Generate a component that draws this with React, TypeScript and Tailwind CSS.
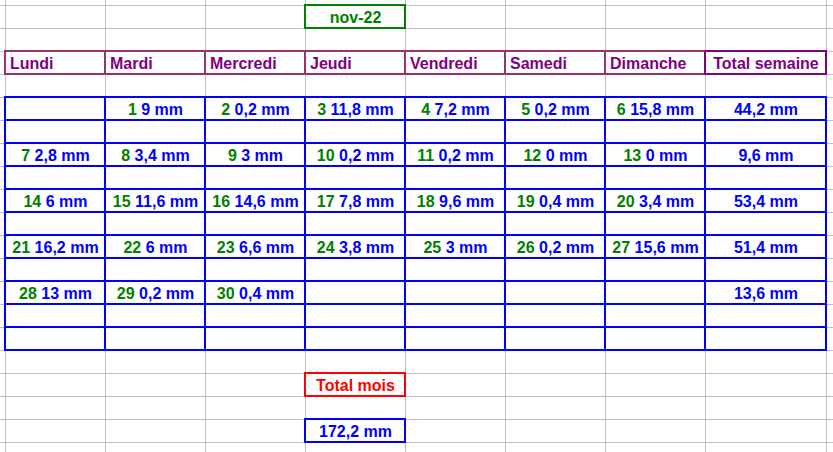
import clsx from "clsx"
import type { ReactNode } from "react"

const days = ["Lundi", "Mardi", "Mercredi", "Jeudi", "Vendredi", "Samedi", "Dimanche"]

type Day = [number, string] | null

// rows of the sheet that hold a week, with its daily values and total
const weeks: { row: number; days: Day[]; total: string }[] = [
  { row: 5, days: [null, [1, "9"], [2, "0,2"], [3, "11,8"], [4, "7,2"], [5, "0,2"], [6, "15,8"]], total: "44,2" },
  { row: 7, days: [[7, "2,8"], [8, "3,4"], [9, "3"], [10, "0,2"], [11, "0,2"], [12, "0"], [13, "0"]], total: "9,6" },
  { row: 9, days: [[14, "6"], [15, "11,6"], [16, "14,6"], [17, "7,8"], [18, "9,6"], [19, "0,4"], [20, "3,4"]], total: "53,4" },
  { row: 11, days: [[21, "16,2"], [22, "6"], [23, "6,6"], [24, "3,8"], [25, "3"], [26, "0,2"], [27, "15,6"]], total: "51,4" },
  { row: 13, days: [[28, "13"], [29, "0,2"], [30, "0,4"], null, null, null, null], total: "13,6" },
]

const ROWS = 21
const COLS = 10

type CellInfo = {
  content?: ReactNode
  align?: "left" | "center"
  frame?: "blue" | "plum" | "purple" | "green" | "red"
}

function buildSheet() {
  const cells: Record<string, CellInfo> = {}

  cells["1,4"] = { content: <span className="text-[#008000]">nov-22</span>, align: "center", frame: "green" }

  days.forEach((d, i) => {
    cells[`3,${i + 1}`] = { content: <span className="text-[#800080]">{d}</span>, align: "left", frame: "plum" }
  })
  cells["3,8"] = { content: <span className="text-[#800080]">Total semaine</span>, align: "center", frame: "purple" }

  for (let r = 5; r <= 15; r++) {
    for (let c = 1; c <= 8; c++) cells[`${r},${c}`] = { align: "center", frame: "blue" }
  }

  weeks.forEach((w) => {
    w.days.forEach((d, i) => {
      if (!d) return
      cells[`${w.row},${i + 1}`].content = (
        <>
          <span className="text-[#008000]">{d[0]}</span>
          <span className="text-[#0000ff]">&nbsp;{d[1]} mm</span>
        </>
      )
    })
    cells[`${w.row},8`].content = <span className="text-[#0000ff]">{w.total} mm</span>
  })

  cells["17,4"] = { content: <span className="text-[#ff0000]">Total mois</span>, align: "center", frame: "red" }
  cells["19,4"] = { content: <span className="text-[#0000ff]">172,2 mm</span>, align: "center", frame: "blue" }

  return cells
}

const sheet = buildSheet()

function Cell({ r, c }: { r: number; c: number }) {
  const info = sheet[`${r},${c}`] ?? {}
  return (
    <div
      className={clsx(
        "flex items-center overflow-visible whitespace-nowrap border-[#c0c0c0] pt-[1px]",
        c >= 1 && "border-l",
        r >= 1 && "border-t",
        info.align === "center" ? "justify-center" : "justify-start pl-[4px]",
        info.frame && "z-10 outline-[2px] outline-solid outline-offset-[-1px]",
        info.frame === "blue" && "outline-[#0000ff]",
        info.frame === "plum" && "outline-[#993366]",
        info.frame === "purple" && "outline-[#800080]",
        info.frame === "green" && "outline-[#008000]",
        info.frame === "red" && "outline-[#ff0000]"
      )}
    >
      {info.content}
    </div>
  )
}

export default function App() {
  const cells = []
  for (let r = 0; r < ROWS; r++) {
    for (let c = 0; c < COLS; c++) cells.push(<Cell key={`${r}-${c}`} r={r} c={c} />)
  }

  return (
    <div className="grid h-[452px] w-[833px] grid-cols-[5px_repeat(7,100px)_121px_1fr] grid-rows-[5px_repeat(19,23px)_1fr] overflow-hidden bg-white font-['Liberation_Sans',Arial,sans-serif] text-[16px] font-bold leading-normal">
      {cells}
    </div>
  )
}
